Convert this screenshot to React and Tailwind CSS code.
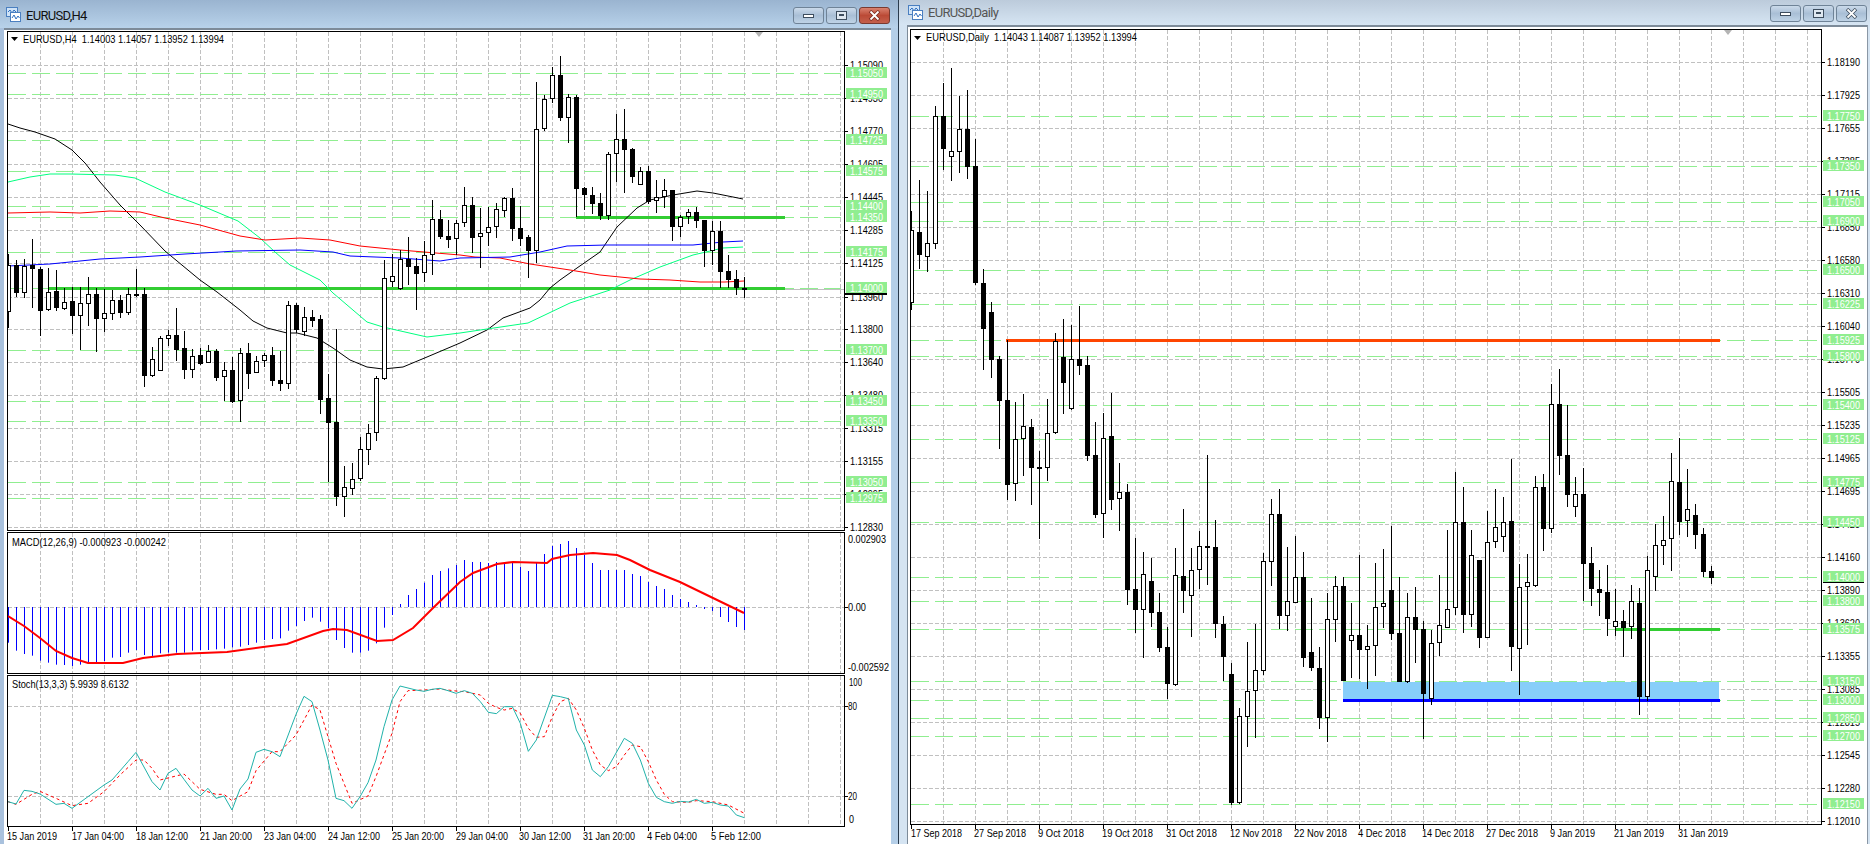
const L = [
[254,265,312,328,1],[260,265,293,297,0],[259,266,293,298,1],[239,265,269,308,0],[267,269,311,336,0],[268,292,310,311,1],[270,291,308,311,0],[288,302,309,310,1],[287,301,316,334,0],[287,303,316,350,1],
[277,294,304,326,1],[288,294,319,352,0],[289,313,319,332,1],[290,300,314,320,1],[295,300,313,318,0],[288,294,313,315,1],[269,294,296,297,0],[288,294,376,387,0],[347,359,376,377,1],[336,338,371,371,1],
[330,335,339,346,1],[308,335,350,361,0],[331,348,370,379,0],[349,356,370,378,1],[348,355,364,365,0],[345,351,363,363,1],[349,351,378,381,0],[362,370,377,401,1],[357,370,402,403,0],[348,353,401,422,1],
[343,353,374,389,0],[356,361,373,373,1],[353,355,361,367,1],[347,355,381,386,0],[351,380,384,391,0],[301,305,384,389,1],[303,305,330,333,0],[307,317,332,336,1],[310,317,321,327,0],[315,319,400,414,0],
[374,398,423,482,0],[329,422,497,506,0],[466,487,497,517,1],[463,479,489,495,1],[437,449,479,481,1],[424,433,450,465,1],[376,378,433,441,1],[260,278,379,380,1],[254,276,282,287,1],[250,259,289,290,1],
[237,259,267,285,0],[258,266,274,310,0],[241,255,273,282,1],[200,219,255,275,1],[210,219,237,239,0],[220,236,240,248,0],[220,223,239,255,1],[187,205,223,227,1],[197,205,238,253,0],[208,233,237,268,1],
[207,227,233,246,1],[203,209,227,238,1],[197,198,211,217,1],[188,198,229,241,0],[206,228,239,246,0],[235,237,251,278,0],[82,129,251,263,1],[95,99,129,131,1],[67,75,99,103,1],[56,75,118,121,0],
[94,97,118,143,1],[95,97,189,217,0],[187,188,195,210,0],[187,195,204,214,0],[193,203,216,220,0],[152,154,216,220,1],[114,139,154,182,1],[109,139,150,193,0],[148,149,177,183,0],[167,171,185,185,1],
[166,171,202,204,0],[180,197,201,213,1],[179,190,197,208,1],[190,190,227,241,0],[215,217,227,237,1],[209,212,217,224,1],[207,212,221,228,0],[220,220,251,267,0],[221,231,251,265,1],[221,231,272,288,0],
[255,271,280,288,0],[270,279,288,295,0],[277,288,290,298,0]];
const R = [
[211,230,303,310,1],[180,232,255,269,0],[191,243,257,272,1],[106,116,244,249,1],[83,116,149,170,0],[68,151,157,181,1],[96,129,152,173,1],[90,129,167,179,0],[139,166,283,285,0],[269,283,329,370,0],
[302,312,360,378,0],[356,359,401,449,0],[340,400,485,500,0],[402,439,484,501,1],[394,426,439,476,1],[419,427,468,505,0],[451,467,469,539,0],[399,433,468,481,1],[333,341,433,434,1],[319,357,383,414,0],
[325,359,409,410,1],[306,359,366,375,0],[356,365,456,461,0],[422,455,515,518,0],[413,438,514,538,1],[393,436,500,510,0],[463,492,499,531,1],[484,492,590,605,0],[538,589,610,633,0],[552,574,610,658,1],
[558,581,613,627,0],[593,612,648,652,0],[627,647,684,699,0],[548,575,685,686,1],[509,576,591,613,0],[548,570,596,637,1],[531,546,570,589,1],[455,546,547,585,0],[520,547,624,638,0],[616,624,657,681,0],
[663,674,803,805,0],[708,716,803,804,1],[642,691,717,747,1],[624,670,691,738,1],[553,561,671,675,1],[499,514,562,586,1],[489,514,616,629,0],[547,601,616,631,1],[536,577,603,603,1],[552,577,658,667,0],
[598,652,668,671,0],[647,668,718,729,0],[593,619,718,742,1],[576,586,620,642,1],[577,586,681,681,0],[603,635,641,678,1],[555,635,650,679,0],[625,646,650,689,1],[563,607,646,676,1],[549,603,607,628,1],
[526,590,634,640,0],[577,633,682,682,0],[593,617,682,683,1],[587,617,630,663,0],[621,629,694,739,0],[630,643,699,705,1],[575,625,643,656,1],[530,609,628,628,1],[472,522,608,615,1],[487,522,615,633,0],
[530,555,615,627,1],[560,560,638,648,0],[511,542,638,638,1],[489,527,542,548,1],[497,522,537,552,1],[459,521,647,671,0],[564,587,649,695,1],[554,582,587,645,1],[476,487,586,587,1],[474,487,529,551,0],
[384,404,529,533,1],[369,404,456,475,0],[405,455,495,507,0],[477,494,507,517,1],[468,494,564,601,0],[547,563,589,606,0],[570,589,593,616,0],[565,592,619,636,0],[589,621,627,636,1],[610,621,628,657,0],
[585,601,627,639,1],[588,603,697,715,0],[556,570,697,701,1],[524,545,577,591,1],[516,540,546,565,1],[453,481,539,571,1],[438,482,522,535,0],[469,509,521,537,1],[504,515,535,549,0],[528,534,572,577,0],[566,571,578,584,0]];

const Candles = ({ data, x0 }) => data.map(([hi, top, bot, lo, up], i) => {
  const x = x0 + 8 * i;
  return (
    <g key={i}>
      <rect x={x} y={hi} width={1} height={Math.max(lo - hi, 1)} fill="#000" />
      <rect x={x - 2} y={top} width={5} height={Math.max(bot - top, 2)} fill="#000" />
      {up === 1 && bot - top > 2 ? <rect x={x - 1} y={top + 1} width={3} height={bot - top - 2} fill="#fff" /> : null}
    </g>
  );
});

const Z = (pts, ox, oy) => pts.map(([a, b]) => `${ox + a / 3},${oy + b / 3}`).join(" ");
const P = (pts) => pts.map((p) => p.join(",")).join(" ");
const Line = ({ points, stroke, w = 1, dash }) => (
  <polyline points={points} fill="none" stroke={stroke} strokeWidth={w} strokeDasharray={dash} />
);

const VGrid = ({ x0, n, y1, y2 }) => Array.from({ length: n }, (_, k) => (
  <line key={k} x1={x0 + 32 * k + 0.5} x2={x0 + 32 * k + 0.5} y1={y1} y2={y2} stroke="#c0c0c0" strokeDasharray="4 2" shapeRendering="crispEdges" />
));
const HGrid = ({ ys, x1, x2 }) => ys.map((y) => (
  <line key={y} x1={x1} x2={x2} y1={y + 0.5} y2={y + 0.5} stroke="#c0c0c0" strokeDasharray="4 2" shapeRendering="crispEdges" />
));
const Levels = ({ ys, x1, x2 }) => ys.map((y) => (
  <line key={y} x1={x1} x2={x2} y1={y + 0.5} y2={y + 0.5} stroke="#90ee90" strokeDasharray="18 6" shapeRendering="crispEdges" />
));
const T = ({ x, y, w, fill = "#000", children }) => (
  <text x={x} y={y} fill={fill} fontSize="11" textLength={w} lengthAdjust="spacingAndGlyphs" className="whitespace-pre">{children}</text>
);

const TickLabels = ({ items, tx, bx }) => items.map(([y, s]) => (
  <g key={s}>
    <rect x={bx - 1} y={y} width={4} height={1} fill="#000" />
    <T x={tx} y={y + 4} w={33}>{s}</T>
  </g>
));
const Boxes = ({ items, tx, bx }) => items.map(([y, s]) => (
  <g key={s}>
    <rect x={bx} y={y - 6} width={41} height={11} fill="#90ee90" />
    <T x={tx} y={y + 4} w={33} fill="#fff">{s}</T>
  </g>
));

const MinIcon = () => (
  <svg width="13" height="9" viewBox="0 0 13 9"><rect x="1.5" y="3.5" width="10" height="3" fill="#fff" stroke="#3d4d5e" /></svg>
);
const MaxIcon = () => (
  <svg width="13" height="11" viewBox="0 0 13 11"><rect x="1.5" y="1.5" width="10" height="8" fill="#dfe8f1" stroke="#3d4d5e" /><rect x="4" y="4" width="5" height="2" fill="#3d4d5e" /></svg>
);
const CloseIcon = ({ c }) => (
  <svg width="13" height="11" viewBox="0 0 13 11">
    <path d="M2 1 L11 10 M11 1 L2 10" stroke={c} strokeWidth="3.4" />
    <path d="M2.5 1.5 L10.5 9.5 M10.5 1.5 L2.5 9.5" stroke="#fff" strokeWidth="1.8" />
  </svg>
);
const WinIcon = () => (
  <svg width="15" height="15" viewBox="0 0 15 15" className="shrink-0">
    <rect x="0.5" y="0.5" width="11" height="9" fill="#cfe3f7" stroke="#4a7fc0" />
    <path d="M2 5 L4 3 L6 6 L8 3 L10 5" fill="none" stroke="#2f6fc0" />
    <rect x="4.5" y="5.5" width="10" height="9" fill="#fff" stroke="#4a7fc0" />
    <path d="M6 11 L8 8 L10 12 L12 9 L13.5 11" fill="none" stroke="#2f6fc0" />
  </svg>
);

const Btn = ({ children, red }) => (
  <div className={red
    ? "flex w-[31px] h-[17px] items-center justify-center rounded-[3px] border border-[#7a3a30] bg-linear-to-b from-[#d9826f] via-[#bb4a36] to-[#c4604c]"
    : "flex w-[31px] h-[17px] items-center justify-center rounded-[3px] border border-[#6f8397] bg-linear-to-b from-[#cbdaea] via-[#a9bfd6] to-[#bfd3e6]"}>
    {children}
  </div>
);

const Title = ({ text, active }) => (
  <div className={active
    ? "flex h-[28px] items-start pl-[6px] pr-[8px] pt-[7px] bg-linear-to-b from-[#9ab4d0] to-[#b8d2ea]"
    : "flex h-[25px] items-start pl-[9px] pr-[3px] pt-[5px] bg-linear-to-b from-[#bccbdb] to-[#d6e5f3]"}>
    <WinIcon />
    <span className={active
      ? "ml-[5px] mt-[1px] font-['Roboto'] text-[13px] leading-[16px] tracking-[-0.7px] text-[#111111]"
      : "ml-[5px] mt-[0px] font-['Roboto'] text-[13px] leading-[16px] tracking-[-0.7px] text-[#555555]"}>{text}</span>
    <div className="ml-auto flex gap-[2px]">
      <Btn><MinIcon /></Btn>
      <Btn><MaxIcon /></Btn>
      <Btn red={active}><CloseIcon c={active ? "#7a2a20" : "#3d4d5e"} /></Btn>
    </div>
  </div>
);

const Svg = ({ x, y, w, h, children, cls = "" }) => (
  <svg width={w} height={h} viewBox={`${x} ${y} ${w} ${h}`} className={`block shrink-0 ${cls}`}>{children}</svg>
);

/* ---------- H4 chart ---------- */
const hGridL = [65, 98, 131, 164, 197, 230, 263, 297, 329, 362, 395, 428, 461, 494, 527];
const labelsL = ["1.15090","1.14930","1.14770","1.14605","1.14445","1.14285","1.14125","1.13960","1.13800","1.13640","1.13480","1.13315","1.13155","1.12995","1.12830"].map((s, i) => [hGridL[i], s]);
const boxesL = [[73,"1.15050"],[94,"1.14950"],[140,"1.14725"],[171,"1.14575"],[206,"1.14400"],[217,"1.14350"],[252,"1.14175"],[288,"1.14000"],[350,"1.13700"],[401,"1.13450"],[421,"1.13350"],[482,"1.13050"],[498,"1.12975"]];

const blackMA = [[8,124],[20,128],[35,132],[55,139],[72,150],[85,163],[100,182],[120,205],[140,225],[165,251],[200,280],[217,292],[240,310],[253,321],[267,328],[287,333],[297,333],[317,338],[333,348],[350,360],[367,367],[383,369],[403,367],[427,357],[460,343],[487,330],[503,318],[530,308],[540,300],[550,288],[560,280],[577,268],[600,252],[617,227],[637,208],[650,200],[673,195],[697,191],[713,193],[743,199]];
const greenMA = [[8,182],[30,177],[50,174],[70,174],[115,175],[135,178],[165,192],[200,205],[238,221],[260,238],[275,252],[290,265],[320,280],[333,293],[367,322],[383,327],[427,337],[460,333],[487,329],[528,323],[570,303],[610,290],[630,280],[660,267],[693,255],[723,248],[743,247]];
const redMA = [[8,213],[50,212],[80,213],[110,211],[140,212],[165,218],[200,225],[240,236],[265,240],[300,238],[330,240],[360,246],[400,250],[460,255],[475,257],[500,258],[530,264],[570,270],[600,275],[640,279],[670,280],[700,282],[725,282],[744,281]];
const blueMA = [[8,266],[50,264],[70,262],[100,259],[140,257],[185,254],[220,252],[236,251],[300,250],[333,252],[350,256],[400,258],[440,261],[460,258],[510,257],[540,252],[567,246],[607,245],[693,245],[723,242],[743,241]];

const macdZ = [248,272,282,287,302,308,314,315,318,314,310,307,303,293,291,278,270,285,288,280,278,278,278,272,270,270,268,266,262,260,255,248,240,237,235,212,198,183,173,185,205,240,264,278,278,272,250,203,165,132,105,87,68,45,33,25,15];
const macdEnd = [560,562,562,563,562,563,563,567,571,563,554,546,544,541,548,555,563,570,570,570,570,574,576,582,586,589,595,599,602,605,609,611,617,622,627,630];
const macdYs = [...macdZ.map((v) => 560 + v / 3), ...macdEnd];
const signal = [[8,616],[24,626],[40,638],[56,651],[72,658],[88,663],[123,663],[143,658],[177,654],[227,652],[263,647],[287,644],[323,631],[333,629],[347,630],[377,641],[393,640],[413,628],[433,608],[460,582],[473,573],[497,564],[513,562],[547,563],[552,559],[570,555],[593,553],[617,555],[630,560],[650,570],[680,582],[713,598],[744,613]];

const stochA = Z([[24,725],[48,732],[72,691],[96,694],[120,702],[168,733],[192,730],[216,745],[264,710],[312,675],[336,660],[384,605],[408,577],[456,665],[480,690],[504,640],[528,625],[552,658],[576,690],[600,708],[624,685],[648,715],[672,708],[696,750],[720,687],[744,657],[768,577],[792,568],[816,575],[840,590],[888,463],[912,409],[936,425],[960,510],[984,600],[1008,715],[1032,722],[1056,745],[1080,710],[1104,668],[1128,600],[1152,500],[1176,420],[1200,378],[1248,390],[1272,394],[1296,388],[1320,385],[1344,392],[1368,400]], 0, 560)
 + " " + Z([[13,392],[37,400],[61,425],[85,457],[109,461],[133,440],[157,440],[181,490],[205,574],[229,540],[277,406],[301,410],[325,416],[349,510],[373,555],[397,630],[421,650],[445,620],[493,535],[517,550],[541,600],[565,670],[589,712],[613,725],[637,730],[661,724],[685,726],[709,718],[733,730],[757,727],[781,735],[805,738],[829,765],[853,773]], 460, 560);
const stochB = Z([[24,725],[48,733],[96,703],[120,694],[168,715],[216,737],[264,730],[312,695],[360,645],[408,600],[432,600],[456,625],[480,660],[552,642],[600,688],[648,703],[672,703],[696,722],[744,695],[768,632],[816,575],[840,575],[888,525],[936,435],[960,450],[984,530],[1008,610],[1056,730],[1104,708],[1128,650],[1176,520],[1200,425],[1224,392],[1272,390],[1320,387],[1368,393]], 0, 560)
 + " " + Z([[13,395],[61,405],[85,430],[109,442],[133,450],[157,445],[181,460],[205,505],[229,532],[253,530],[277,470],[301,425],[325,415],[349,450],[373,505],[397,570],[421,615],[445,632],[469,620],[493,585],[517,555],[541,560],[565,605],[589,660],[613,703],[637,725],[685,727],[709,722],[757,725],[805,735],[853,760]], 460, 560);

const datesL = [[7,50,"15 Jan 2019"],[72,52,"17 Jan 04:00"],[136,52,"18 Jan 12:00"],[200,52,"21 Jan 20:00"],[264,52,"23 Jan 04:00"],[328,52,"24 Jan 12:00"],[392,52,"25 Jan 20:00"],[456,52,"29 Jan 04:00"],[519,52,"30 Jan 12:00"],[583,52,"31 Jan 20:00"],[647,50,"4 Feb 04:00"],[711,50,"5 Feb 12:00"]];

const PlotBox = ({ cls, children }) => (
  <div className={`box-border border border-black ${cls}`}>{children}</div>
);

const LeftWindow = () => (
  <div className="flex w-[898px] shrink-0 flex-col">
    <Title text="EURUSD,H4" active />
    <div className="flex flex-1">
      <div className="w-[4px] bg-[#a9c1dd]" />
      <div className="flex w-[887px] flex-col border-t-2 border-[#7d8b99] bg-white pt-[1px]">
        {/* main pane */}
        <div className="flex h-[500px] pl-[3px]">
          <PlotBox cls="w-[838px]">
            <Svg x={8} y={32} w={836} h={498}>
              <VGrid x0={40} n={26} y1={32} y2={530} />
              <HGrid ys={hGridL} x1={8} x2={844} />
              <Levels ys={boxesL.map((b) => b[0]).filter((y) => y !== 288)} x1={8} x2={841} />
              <line x1={785} x2={844} y1={289.5} y2={289.5} stroke="#c0c0c0" />
              <Levels ys={[288]} x1={8} x2={841} />
              <rect x={576} y={216} width={209} height={3} fill="#32cd32" />
              <rect x={48} y={287} width={737} height={3} fill="#32cd32" />
              <Line points={P(blackMA)} stroke="#000" />
              <Line points={P(greenMA)} stroke="#00ff7f" />
              <Line points={P(redMA)} stroke="#ff0000" />
              <Line points={P(blueMA)} stroke="#0000ff" />
              <Candles data={L} x0={8} />
              <polygon points="755,32 763,32 759,37" fill="#b4b4b4" />
              <polygon points="11,37 18,37 14.5,41" fill="#000" />
              <T x={23} y={43} w={201}>{"EURUSD,H4  1.14003 1.14057 1.13952 1.13994"}</T>
            </Svg>
          </PlotBox>
          <Svg x={845} y={31} w={46} h={500} cls="overflow-visible">
            <TickLabels items={labelsL} tx={850} bx={845} />
            <Boxes items={boxesL} tx={850} bx={846} />
            <rect x={845} y={293} width={42} height={2} fill="#000" />
          </Svg>
        </div>
        {/* MACD */}
        <div className="mt-[1px] flex h-[142px] pl-[3px]">
          <PlotBox cls="w-[838px]">
            <Svg x={8} y={533} w={836} h={140}>
              <VGrid x0={40} n={26} y1={533} y2={673} />
              <HGrid ys={[607]} x1={8} x2={844} />
              {macdYs.map((y, i) => (
                <rect key={i} x={8 + 8 * i} y={Math.min(y, 607)} width={1} height={Math.abs(y - 607)} fill="#0000ff" />
              ))}
              <Line points={P(signal)} stroke="#ff0000" w={2} />
              <T x={12} y={546} w={154}>MACD(12,26,9) -0.000923 -0.000242</T>
            </Svg>
          </PlotBox>
          <Svg x={845} y={532} w={46} h={142} cls="overflow-visible">
            <rect x={845} y={607} width={3} height={1} fill="#000" />
            <T x={848} y={543} w={38}>0.002903</T>
            <T x={848} y={611} w={18}>0.00</T>
            <T x={848} y={671} w={41}>-0.002592</T>
          </Svg>
        </div>
        {/* Stoch */}
        <div className="mt-[1px] flex h-[152px] pl-[3px]">
          <PlotBox cls="w-[838px]">
            <Svg x={8} y={676} w={836} h={150}>
              <VGrid x0={40} n={26} y1={676} y2={826} />
              <HGrid ys={[706, 796]} x1={8} x2={844} />
              <Line points={stochB} stroke="#ff0000" dash="3 3" />
              <Line points={stochA} stroke="#20b2aa" />
              <T x={12} y={688} w={117}>Stoch(13,3,3) 5.9939 8.6132</T>
            </Svg>
          </PlotBox>
          <Svg x={845} y={675} w={46} h={152}>
            <rect x={845} y={706} width={3} height={1} fill="#000" />
            <rect x={845} y={796} width={3} height={1} fill="#000" />
            <T x={849} y={686} w={13}>100</T>
            <T x={848} y={710} w={9}>80</T>
            <T x={848} y={800} w={9}>20</T>
            <T x={849} y={823} w={5}>0</T>
          </Svg>
        </div>
        {/* dates */}
        <Svg x={4} y={827} w={887} h={17}>
          {datesL.map(([x, w, s], i) => (
            <g key={s}>
              <rect x={8 + 64 * i} y={827} width={1} height={4} fill="#000" />
              <T x={x} y={840} w={w}>{s}</T>
            </g>
          ))}
        </Svg>
      </div>
      <div className="w-[7px] bg-[#b5cfe8]" />
    </div>
  </div>
);

/* ---------- Daily chart ---------- */
const hGridR = Array.from({ length: 24 }, (_, k) => 62 + 33 * k);
const labelsR = ["1.18190","1.17925","1.17655","1.17385","1.17115","1.16850","1.16580","1.16310","1.16040","1.15770","1.15505","1.15235","1.14965","1.14695","1.14425","1.14160","1.13890","1.13620","1.13355","1.13085","1.12815","1.12545","1.12280","1.12010"].map((s, i) => [hGridR[i], s]);
const boxesR = [[116,"1.17750"],[166,"1.17350"],[202,"1.17050"],[221,"1.16900"],[270,"1.16500"],[304,"1.16225"],[340,"1.15925"],[356,"1.15800"],[405,"1.15400"],[439,"1.15125"],[482,"1.14775"],[522,"1.14450"],[577,"1.14000"],[601,"1.13800"],[629,"1.13575"],[681,"1.13150"],[700,"1.13000"],[718,"1.12850"],[736,"1.12700"],[804,"1.12150"]];
const datesR = [[911,51,"17 Sep 2018"],[974,52,"27 Sep 2018"],[1038,46,"9 Oct 2018"],[1102,51,"19 Oct 2018"],[1166,51,"31 Oct 2018"],[1230,52,"12 Nov 2018"],[1294,53,"22 Nov 2018"],[1358,48,"4 Dec 2018"],[1422,52,"14 Dec 2018"],[1486,52,"27 Dec 2018"],[1550,45,"9 Jan 2019"],[1614,50,"21 Jan 2019"],[1678,50,"31 Jan 2019"]];

const RightWindow = () => (
  <div className="flex flex-1 flex-col">
    <Title text="EURUSD,Daily" />
    <div className="flex flex-1">
      <div className="w-[8px] bg-[#d5e4f2]" />
      <div className="flex w-[960px] flex-col border-l border-t-2 border-[#7d8b99] bg-white pt-[2px]">
        <div className="flex h-[796px] pl-[2px]">
          <PlotBox cls="w-[912px]">
            <Svg x={911} y={30} w={910} h={794}>
              <VGrid x0={943} n={28} y1={30} y2={824} />
              <HGrid ys={hGridR} x1={911} x2={1821} />
              <Levels ys={boxesR.map((b) => b[0])} x1={911} x2={1817} />
              <rect x={1343} y={682} width={376} height={18} fill="#87cefa" />
              <rect x={1006} y={339} width={714} height={3} fill="#ff4500" />
              <rect x={1343} y={699} width={377} height={3} fill="#0000ff" />
              <rect x={1615} y={628} width={105} height={3} fill="#32cd32" />
              <Candles data={R} x0={911} />
              <polygon points="1724,30 1732,30 1728,35" fill="#b4b4b4" />
              <polygon points="914,36 921,36 917.5,40" fill="#000" />
              <T x={926} y={41} w={211}>{"EURUSD,Daily  1.14043 1.14087 1.13952 1.13994"}</T>
            </Svg>
          </PlotBox>
          <Svg x={1822} y={29} w={45} h={796} cls="overflow-visible">
            <TickLabels items={labelsR} tx={1827} bx={1822} />
            <Boxes items={boxesR} tx={1827} bx={1823} />
            <rect x={1823} y={582} width={41} height={1} fill="#000" />
          </Svg>
        </div>
        <Svg x={908} y={825} w={959} h={19}>
          {datesR.map(([x, w, s], i) => (
            <g key={s}>
              <rect x={911 + 64 * i} y={825} width={1} height={4} fill="#000" />
              <T x={x} y={837} w={w}>{s}</T>
            </g>
          ))}
        </Svg>
      </div>
      <div className="flex-1 border-l border-[#8a97a5] bg-[#d5e4f2]" />
    </div>
  </div>
);

export default function App() {
  return (
    <div className="flex h-[844px] w-[1870px] overflow-hidden bg-white font-['Liberation_Sans',sans-serif]">
      <LeftWindow />
      <div className="w-[1px] bg-[#2a3b4d]" />
      <RightWindow />
    </div>
  );
}
